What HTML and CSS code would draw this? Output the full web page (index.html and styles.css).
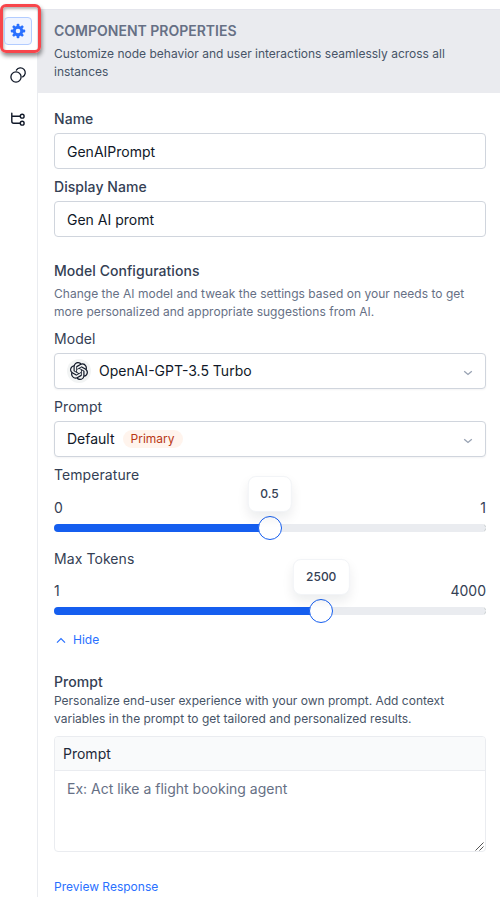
FILE: index.html
```html
<!DOCTYPE html>
<html lang="en">
<head>
<meta charset="utf-8">
<title>Component Properties</title>
<link rel="stylesheet" href="styles.css">
</head>
<body>
<div class="app">
  <nav class="rail">
    <div class="highlight">
      <button class="rail-btn active" aria-label="Properties">
        <svg width="16" height="16" viewBox="0 0 16 16"><g fill="#2970ff"><circle cx="8" cy="8" r="5.2"/><rect x="6.6" y="0.8" width="2.8" height="14.4" rx="1"/><rect x="6.6" y="0.8" width="2.8" height="14.4" rx="1" transform="rotate(45 8 8)"/><rect x="6.6" y="0.8" width="2.8" height="14.4" rx="1" transform="rotate(90 8 8)"/><rect x="6.6" y="0.8" width="2.8" height="14.4" rx="1" transform="rotate(135 8 8)"/></g><circle cx="8" cy="8" r="2.3" fill="#eff4ff"/></svg>
      </button>
    </div>
    <svg class="rail-icon" width="18" height="18" viewBox="0 0 18 18" fill="none" stroke="#101828" stroke-width="1.3" stroke-linecap="round"><circle cx="7" cy="11" r="5.1"/><path d="M7.4 4.1A4.8 4.8 0 1 1 13.7 10.9"/></svg>
    <svg class="rail-icon" width="18" height="18" viewBox="0 0 18 18" fill="none" stroke="#101828" stroke-width="1.4" stroke-linecap="round"><path d="M2.8 3.2V11.3Q2.8 13.2 4.7 13.2H11M2.8 6.2H11"/><circle cx="13.2" cy="6.2" r="1.9"/><circle cx="13.2" cy="13.2" r="1.9"/></svg>
  </nav>
  <main class="panel">
    <header class="panel-head">
      <h1>COMPONENT PROPERTIES</h1>
      <p>Customize node behavior and user interactions seamlessly across all<br>instances</p>
    </header>
    <div class="panel-body">
      <div class="field"><div class="label">Name</div><div class="control">GenAIPrompt</div></div>
      <div class="field"><div class="label">Display Name</div><div class="control">Gen AI promt</div></div>

      <div class="section">
        <div class="label">Model Configurations</div>
        <p class="hint">Change the AI model and tweak the settings based on your needs to get<br>more personalized and appropriate suggestions from AI.</p>
      </div>
      <div class="field"><div class="label regular">Model</div>
        <div class="control select">
          <span class="avatar"><svg width="18" height="18" viewBox="0 0 24 24" fill="#101828"><path d="M22.2819 9.8211a5.9847 5.9847 0 0 0-.5157-4.9108 6.0462 6.0462 0 0 0-6.5098-2.9A6.0651 6.0651 0 0 0 4.9807 4.1818a5.9847 5.9847 0 0 0-3.9977 2.9 6.0462 6.0462 0 0 0 .7427 7.0966 5.98 5.98 0 0 0 .511 4.9107 6.051 6.051 0 0 0 6.5146 2.9001A5.9847 5.9847 0 0 0 13.2599 24a6.0557 6.0557 0 0 0 5.7718-4.2058 5.9894 5.9894 0 0 0 3.9977-2.9001 6.0557 6.0557 0 0 0-.7475-7.0729zm-9.022 12.6081a4.4755 4.4755 0 0 1-2.8764-1.0408l.1419-.0804 4.7783-2.7582a.7948.7948 0 0 0 .3927-.6813v-6.7369l2.02 1.1686a.071.071 0 0 1 .038.052v5.5826a4.504 4.504 0 0 1-4.4945 4.4944zm-9.6607-4.1254a4.4708 4.4708 0 0 1-.5346-3.0137l.142.0852 4.783 2.7582a.7712.7712 0 0 0 .7806 0l5.8428-3.3685v2.3324a.0804.0804 0 0 1-.0332.0615L9.74 19.9502a4.4992 4.4992 0 0 1-6.1408-1.6464zM2.3408 7.8956a4.485 4.485 0 0 1 2.3655-1.9728V11.6a.7664.7664 0 0 0 .3879.6765l5.8144 3.3543-2.0201 1.1685a.0757.0757 0 0 1-.071 0l-4.8303-2.7865A4.504 4.504 0 0 1 2.3408 7.872zm16.5963 3.8558L13.1038 8.364 15.1192 7.2a.0757.0757 0 0 1 .071 0l4.8303 2.7913a4.4944 4.4944 0 0 1-.6765 8.1042v-5.6772a.79.79 0 0 0-.407-.667zm2.0107-3.0231l-.142-.0852-4.7735-2.7818a.7759.7759 0 0 0-.7854 0L9.409 9.2297V6.8974a.0662.0662 0 0 1 .0284-.0615l4.8303-2.7866a4.4992 4.4992 0 0 1 6.6802 4.66zM8.3065 12.863l-2.02-1.1638a.0804.0804 0 0 1-.038-.0567V6.0742a4.4992 4.4992 0 0 1 7.3757-3.4537l-.142.0805L8.704 5.459a.7948.7948 0 0 0-.3927.6813zm1.0976-2.3654l2.602-1.4998 2.6069 1.4998v2.9994l-2.5974 1.4997-2.6067-1.4997Z"/></svg></span>
          <span>OpenAI-GPT-3.5 Turbo</span>
          <svg class="chev" width="10" height="6" viewBox="0 0 10 6"><path d="M1.2 1.2L5 4.5L8.8 1.2"/></svg>
        </div>
      </div>
      <div class="field"><div class="label regular">Prompt</div>
        <div class="control select">
          <span>Default</span><span class="badge">Primary</span>
          <svg class="chev" width="10" height="6" viewBox="0 0 10 6"><path d="M1.2 1.2L5 4.5L8.8 1.2"/></svg>
        </div>
      </div>

      <div class="slider">
        <div class="label regular">Temperature</div>
        <div class="range"><span>0</span><span>1</span></div>
        <div class="track"><div class="fill" style="width:50%"></div><div class="thumb" style="left:50%"><span class="tip">0.5</span></div></div>
      </div>
      <div class="slider tokens">
        <div class="label regular">Max Tokens</div>
        <div class="range"><span>1</span><span>4000</span></div>
        <div class="track"><div class="fill" style="width:62%"></div><div class="thumb" style="left:62%"><span class="tip">2500</span></div></div>
      </div>
      <div class="toggle"><svg width="10" height="7" viewBox="0 0 10 7"><path d="M1 5.7L5 1.5L9 5.7" fill="none" stroke="#2970ff" stroke-width="1.2"/></svg>Hide</div>

      <div class="label">Prompt</div>
      <p class="hint dark">Personalize end-user experience with your own prompt. Add context<br>variables in the prompt to get tailored and personalized results.</p>
      <div class="editor">
        <div class="editor-head">Prompt</div>
        <div class="editor-text">Ex: Act like a flight booking agent
          <svg class="grip" width="9" height="9" viewBox="0 0 9 9" stroke="#555" stroke-width="1"><path d="M.5 8.5L8.5 .5M4.5 8.5L8.5 4.5"/></svg>
        </div>
      </div>
      <a class="preview">Preview Response</a>
    </div>
  </main>
</div>
</body>
</html>
```

FILE: styles.css
```css
* { box-sizing: border-box; }
body { margin: 0; background: #fff; font: 14px/20px Inter, "Liberation Sans", sans-serif; color: #344054; }
h1, p { margin: 0; }
svg { display: block; flex: none; }
.app { display: flex; height: 897px; overflow: hidden; }
.rail { width: 37px; flex: none; display: flex; flex-direction: column; align-items: flex-start; padding-top: 4px; }
.highlight { position: relative; z-index: 1; width: 41px; height: 49px; margin-bottom: 13px; padding: 10px 0 0 1px; border: 3px solid #f8464b; border-radius: 6px; box-shadow: 1px 3px 4px rgba(0,0,0,.45), inset 1px 2px 3px rgba(0,0,0,.3); }
.rail-btn { width: 28px; height: 28px; padding: 0; display: flex; align-items: center; justify-content: center; border: 1px solid #b2ccff; border-radius: 4px; background: #eff4ff; }
.rail-icon { margin: 0 0 26px 9px; }
.panel { flex: 1; min-width: 0; margin-top: 9px; border-left: 1px solid #eaecf0; }
.panel-head { height: 84px; padding: 11px 16px 12px; background: #eaebef; border-top: 1px solid #e4e5ec; }
.panel-head h1 { font-size: 14px; line-height: 20px; font-weight: 600; color: #667085; margin-bottom: 4px; }
.panel-head p { font-size: 12px; line-height: 18px; color: #475467; white-space: nowrap; }
.panel-body { padding: 16px 14px 0 16px; }
.field { margin-bottom: 8px; }
.label { font-weight: 450; line-height: 20px; letter-spacing: .05px; }
.label.regular { font-weight: 400; letter-spacing: .08px; }
.control { height: 36px; margin-top: 4px; padding: 1px 12px 0; display: flex; align-items: center; border: 1px solid #d0d5dd; border-radius: 4px; background: #fff; color: #101828; }
.control.select { padding-top: 0; box-shadow: 0 1px 2px rgba(16,24,40,.05); }
.avatar { width: 24px; height: 24px; margin-right: 8px; display: flex; align-items: center; justify-content: center; border-radius: 50%; background: #f2f4f4; }
.badge { height: 18px; margin-left: 8px; padding: 0 8px; border-radius: 9px; background: #fff4ed; color: #b93815; font-size: 12px; line-height: 18px; }
.chev { margin: 3px 0 0 auto; fill: none; stroke: #98a2b3; stroke-width: 1.3; }
.section { margin: 24px 0 8px; }
.hint { font-size: 12px; line-height: 18px; color: #667085; white-space: nowrap; }
.section .hint { margin-top: 4px; letter-spacing: .02px; }
.hint.dark { color: #475467; }
.range { margin: 13px 0 6px; display: flex; justify-content: space-between; }
.track { position: relative; height: 8px; border-radius: 4px; background: #eaecf0; border-right: 1px dashed #c4cacc; }
.fill { height: 8px; border-radius: 4px 0 0 4px; background: #155eef; }
.thumb { position: absolute; top: -8px; width: 24px; height: 24px; margin-left: -12px; border: 1.5px solid #155eef; border-radius: 50%; background: #fff; }
.tip { position: absolute; left: 50%; bottom: 27px; height: 36px; padding: 0 12px; transform: translateX(-50%); border: 1px solid #f2f4f7; border-radius: 8px; background: #fff; box-shadow: 0 6px 12px rgba(16,24,40,.08); font-size: 12px; line-height: 34px; font-weight: 450; }
.tokens { margin-top: 17px; }
.tokens .range { margin-top: 12px; }
.toggle { display: flex; align-items: center; gap: 7px; margin: 15px 0 22px 2px; font-size: 12px; color: #2970ff; }
.editor { height: 116px; margin-top: 8px; border: 1px solid #eaecf0; border-radius: 4px; overflow: hidden; }
.editor-head { height: 34px; padding: 0 8px; line-height: 34px; background: #f9fafb; border-bottom: 1px solid #eaecf0; color: #1d2939; }
.editor-text { position: relative; height: 80px; padding: 8px 12px; color: #667085; }
.grip { position: absolute; right: 1px; bottom: 0; }
.preview { display: block; margin-top: 25px; font-size: 12px; color: #2970ff; }
```
